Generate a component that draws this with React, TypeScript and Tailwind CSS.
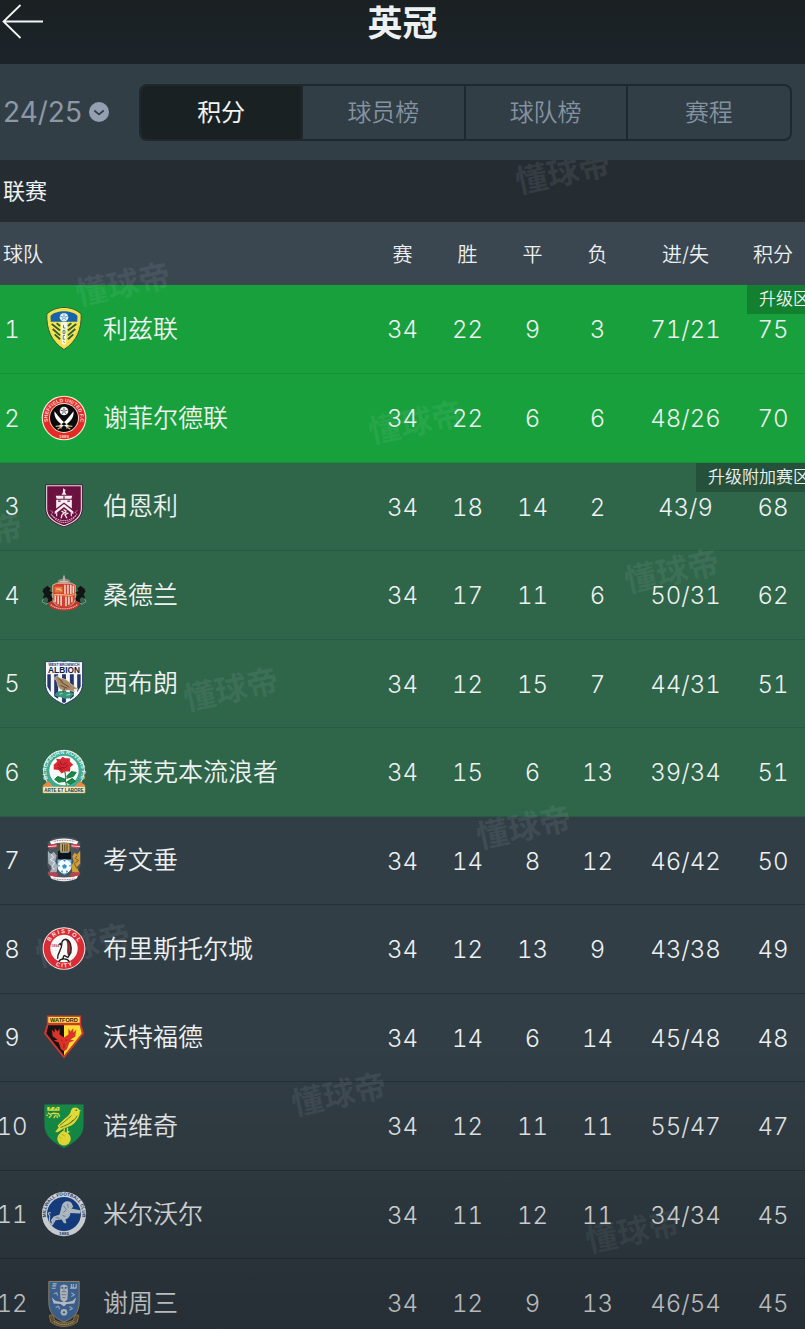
import { useState } from "react";
import type { ReactNode } from "react";

const LABEL = "Liberation Sans, sans-serif";

function Leeds() {
  return (
    <>
      <path d="M24.5 2.5C31 2.5 38 5 42 9.500C42.500 24 38 37 24.500 45.500C11 37 6.500 24 7 9.500C11 5 18 2.500 24.500 2.500Z" fill="#f2e14c" stroke="#31583a" strokeWidth="1" />
      <path d="M24.500 6.500C30 6.500 35.500 8 38.500 11C38.800 23 35 33.500 24.500 41.500C14 33.500 10.200 23 10.500 11C13.500 8 19 6.500 24.500 6.500Z" fill="#f4e64f" />
      <path d="M24.500 6.500C30 6.500 35.500 8 38.300 11.200L38 17H11L10.700 11.200C13.500 8 19 6.500 24.500 6.500Z" fill="#1763a8" />
      <g stroke="#315b3a" strokeWidth="1.900">
        <path d="M12 19.500L20.500 26M13 24.500L20.500 31M15 30L20.500 35M17 18.500L20.500 21.500" />
        <path d="M37 19.500L28.500 26M36 24.500L28.500 31M34 30L28.500 35M32 18.500L28.500 21.500" />
      </g>
      <path d="M21.300 17.500H27.700L26.500 39L24.500 41L22.500 39Z" fill="#f7f7e8" />
      <path d="M24 20.500V23.500H26M23.500 26H25.500V29H23.500ZM25.500 31H23.700V35H25.500M24 37L25 38.500" fill="none" stroke="#53744f" strokeWidth=".9" />
      <circle cx="24.500" cy="12.500" r="4.400" fill="#dcebf5" />
      <circle cx="24.500" cy="12.500" r="1.300" fill="none" stroke="#6c9dc8" strokeWidth=".8" />
      <path d="M24.500 8.500V11M20.500 11.500L23 12.200M28.500 11.500L26 12.200M22 15.800L23.700 13.800M27 15.800L25.300 13.800" stroke="#6c9dc8" strokeWidth=".8" />
    </>
  );
}

function SheffieldUnited() {
  return (
    <>
      <circle cx="24.500" cy="24.500" r="22.800" fill="#f6e9d5" />
      <circle cx="24.500" cy="24.500" r="21.600" fill="#e22a26" />
      <circle cx="24.500" cy="24.500" r="15.200" fill="#f4e3d3" />
      <circle cx="24.500" cy="24.500" r="14.300" fill="#0c0a0b" />
      <path id="shu-top" d="M8 27.500A16.700 16.700 0 1 1 41 27.500" fill="none" />
      <text fontFamily={LABEL} fontSize="5.200" fontWeight="700" fill="#fbd9cf">
        <textPath href="#shu-top" startOffset="50%" textAnchor="middle">SHEFFIELD UNITED F.C</textPath>
      </text>
      <text x="24.500" y="44.800" textAnchor="middle" fontFamily={LABEL} fontSize="4.500" fontWeight="700" fill="#fbd9cf">1889</text>
      <circle cx="24.500" cy="17.300" r="4.400" fill="#f5f5f5" />
      <path d="M24.500 14V16M21 16.500L23.200 17M28 16.500L25.800 17M22.500 20.300L23.700 18.600M26.500 20.300L25.300 18.600" stroke="#444" strokeWidth=".8" />
      <circle cx="24.500" cy="17.300" r="1.200" fill="none" stroke="#444" strokeWidth=".6" />
      <path d="M14.800 17.500C14 24 18 29.500 27.800 34L29.500 32C23 28.500 20.500 24.500 14.800 17.500ZM34.200 17.500C35 24 31 29.500 21.200 34L19.500 32C26 28.500 28.500 24.500 34.200 17.500Z" fill="#fff" />
      <path d="M16 33L20 32.500L22 35M33 33L29 32.500L27 35M28 34L31 36M21 34L18 36" fill="none" stroke="#d9b878" strokeWidth="1.300" />
    </>
  );
}

function Burnley() {
  return (
    <>
      <path d="M5.500 2.500H43.500V27C43.500 37 35 42.500 24.500 46C14 42.500 5.500 37 5.500 27Z" fill="#4d0a2d" />
      <path d="M6.800 3.800H42.200V27C42.200 36 34 41.500 24.500 44.700C15 41.500 6.800 36 6.800 27Z" fill="#6a1140" stroke="#f0dce6" strokeWidth="1.100" />
      <path d="M23.500 6.500L26 8L25.500 10.500L27 13H22L23.500 10.500Z" fill="#f5eaf0" />
      <path d="M16 14H33L32 17H17ZM16.500 18H32.500V27L24.500 21L16.500 27Z" fill="#f7eef3" />
      <path d="M18.500 19.500H21M28 19.500H30.500M24.500 14.500V17" stroke="#6a1140" strokeWidth="1.300" />
      <path d="M24.500 22.500L34 30V33L24.500 25.600L15 33V30Z" fill="#f7eef3" />
      <path d="M17 31V35M32 31V35" stroke="#e9c9d9" strokeWidth="1.300" />
      <path d="M24 28L26.500 29.500L25.200 31.500L28 32L25.500 33.500L27.500 37M25 31L22.500 33.500L21.500 37M22 29.500L24 31" fill="none" stroke="#f7eef3" strokeWidth="1.300" />
      <path d="M11 29L13 31L11.500 33C16 38 20 39.300 24.500 39.500C29 39.300 33 38 37.500 33L36 31L38 29M12 34C17 40 20 41.200 24.500 41.500C29 41.200 32 40 37 34" fill="none" stroke="#dfb6cb" strokeWidth="1" strokeDasharray="1.700 .6" />
    </>
  );
}

function Sunderland() {
  return (
    <>
      <path d="M24.500 5L26 8L30 9L31.500 13H17.500L19 9L23 8Z" fill="#9a8b83" />
      <path d="M24.500 4.500V11M20.500 11H28.500" stroke="#d9d5cc" strokeWidth="1" />
      <path d="M13 14.500L17 12.500H32L36 14.500V29C35 34 30 37 24.500 39C19 37 14 34 13 29Z" fill="#cf3f2c" stroke="#efc8a9" strokeWidth=".9" />
      <path d="M15.500 25V32M18.500 25V34M21.500 25V35.500M25.500 14V23.500M28.500 14V23.500M31.500 14V23.500M34 15V23M26.500 26V36M29.500 26V34.500M32.500 26V32" stroke="#f8e9e1" strokeWidth="1.400" />
      <path d="M14 24.500C19 22.500 30 26.500 35 24" fill="none" stroke="#f2ba72" strokeWidth="1.300" />
      <path d="M15 16H23V22H15Z" fill="#e2793a" />
      <path d="M16.500 18.500H20.500L22 20.500" stroke="#fae0b2" fill="none" />
      <path d="M3.500 18.500L7.500 15L11 18L9.500 20.500L13 22L10.500 24L13 28L11.500 33H7.500L8.500 28.500L6 26.500L2.500 29L4.500 23.500L2.500 21Z" fill="#121514" />
      <path d="M45.500 18.500L41.500 15L38 18L39.500 20.500L36 22L38.500 24L36 28L37.500 33H41.500L40.500 28.500L43 26.500L46.500 29L44.500 23.500L46.500 21Z" fill="#121514" />
      <path d="M3.500 28L2 31L6 34L12 31L18 36L24.500 38.500L31 36L37 31L43 34L47 31L45.500 28" fill="none" stroke="#a9b0a8" strokeWidth=".7" />
      <path d="M8 33L12 31L17 35.500L24.500 37.500L32 35.500L37 31L41 33L38 37.500C31 41.500 18 41.500 11 37.500Z" fill="#bf342b" />
      <path d="M11 34.500C18 40 31 40 38 34.500" fill="none" stroke="#f3c9bf" strokeWidth="1.200" strokeDasharray="1.300 .8" />
    </>
  );
}

function WestBrom() {
  return (
    <>
      <path d="M5.500 2.500C11 4 18 1 24.500 2.500C31 1 38 4 43.500 2.500V25C43.500 36 35 41.500 24.500 46.500C14 41.500 5.500 36 5.500 25Z" fill="#f3f6fa" stroke="#1d2f5c" strokeWidth=".9" />
      <path d="M7.500 15.500H11V34L7.500 28ZM14.500 15.500H18.500V40.500L14.500 38ZM22.500 15.500H26.500V44L24.500 45L22.500 44ZM30.500 15.500H34.500V38L30.500 41ZM38 15.500H41.500V28L38 34Z" fill="#26356b" />
      <text x="24.500" y="7.500" textAnchor="middle" fontFamily={LABEL} fontSize="3.600" fontWeight="700" fill="#26356b">WEST BROMWICH</text>
      <text x="24.500" y="14.600" textAnchor="middle" fontFamily={LABEL} fontSize="8.500" fontWeight="700" fill="#14213f">ALBION</text>
      <path d="M15 37C18 31 22 34 24 32C28 35 32 33 35 36C31 38 32 41 28 40C24 42 22 38 19 39Z" fill="#379478" />
      <path d="M20 36L23 35M27 37L31 36" stroke="#a4dfc5" />
      <path d="M14 20L17.500 17L21 19.500C25 20 29 22 31 25L39 31L34.500 31L36 33.500L29 32C22 33.500 18 30 17.500 24L16.500 21.500Z" fill="#a78b65" stroke="#f0e6d4" strokeWidth=".6" />
      <path d="M21 23L30 29M21 27L28 30M19 20L23 23M25 30L24 34" stroke="#61452f" strokeWidth="1" />
    </>
  );
}

function Blackburn() {
  return (
    <>
      <circle cx="24.500" cy="23" r="21.300" fill="#e9f4ec" />
      <circle cx="24.500" cy="23" r="20.300" fill="#43a891" />
      <path id="rovers-arc" d="M8.800 33A18 18 0 1 1 40.200 33" fill="none" />
      <text fontFamily={LABEL} fontSize="5.600" fontWeight="700" fill="#dff4e5">
        <textPath href="#rovers-arc" startOffset="50%" textAnchor="middle">BLACKBURN ROVERS F.C</textPath>
      </text>
      <circle cx="24.500" cy="23" r="15" fill="#f7faf5" />
      <path d="M25 23C27 28 25 32 27 38M26 32L18 29L15 32L19 35L26 34M27 29L32 24L37 25L34 29L27 31M27 35L33 31L36 34L31 37Z" fill="#178a4b" stroke="#14763f" strokeWidth="1" />
      <path d="M14 17L17.500 14L16.500 11L21 11.500L23 9L26 10.500L30.500 10.500L30.500 14L34 17L31 19.500L30.500 24L25.500 24L22 26L19 22.500L14 22Z" fill="#da2734" />
      <path d="M19 16C20 21 27 22 28 17M21 13.500C20 17 25 19 27 14M18 20L23 22" fill="none" stroke="#8f1421" strokeWidth="1" />
      <path d="M3 38L8 34L12 37V40H3ZM46 38L41 34L37 37V40H46Z" fill="#e18b43" />
      <path d="M3 39.500H46V46H3Z" fill="#f6edca" stroke="#bb9e62" strokeWidth=".5" />
      <text x="24.500" y="44.700" textAnchor="middle" fontFamily={LABEL} fontSize="4.600" fontWeight="700" fill="#27342c">ARTE ET LABORE</text>
    </>
  );
}

function Coventry() {
  return (
    <>
      <path d="M13 2.500C20 1 29 1 36 2.500L41.500 7L39.500 12L41.500 17V30L39.500 35L41.500 39L36 44.500C29 47.500 20 47.500 13 44.500L7.500 39L9.500 35L7.500 30V17L9.500 12L7.500 7Z" fill="#4b555e" />
      <path d="M10 5.500C19 1.500 30 1.500 39 5.500L37.500 9C29 6 20 6 11.500 9Z" fill="#faf7f7" />
      <path d="M8 9L17 8V12L9 13ZM41 9L32 8V12L40 13Z" fill="#c23f4c" />
      <path d="M8 11L17 10M41 11L32 10" stroke="#f7e9ea" strokeWidth=".9" />
      <path d="M10 40C19 43 30 43 39 40L37.500 43.500C29 47 20 47 11.500 43.500Z" fill="#faf7f7" />
      <path d="M8 36.500L18 38V42L9 40ZM41 36.500L31 38V42L40 40Z" fill="#c23f4c" />
      <path d="M14 5.500C21 4 28 4 35 5.500M14 43.500C21 45 28 45 35 43.500" fill="none" stroke="#9c7178" strokeWidth="1" strokeDasharray="1 .7" />
      <path d="M18 16H32V31C32 35 28 38 25 39.500C21 38 18 35 18 31Z" fill="#79c4ed" />
      <path d="M18 16L20 14.500L21 17H29L31 15L32 17V24H18Z" fill="#101319" />
      <path d="M20.500 7.500H30V16H20.500Z" fill="#c9a24e" />
      <path d="M23 8.500V15.500M25.300 8.500V15.500M27.600 8.500V15.500" stroke="#45381f" strokeWidth="1" />
      <circle cx="25" cy="31" r="7" fill="#f6fbff" />
      <path d="M25 28.500L27.500 30.300L26.500 33.200H23.500L22.500 30.300ZM23.500 24.500H26.500L25 26.500ZM18.500 29L20.500 30L19 32ZM31.500 29L29.500 30L31 32ZM21 36L23 35L23.500 37.500ZM29 36L27 35L26.500 37.500Z" fill="#3e91c4" />
      <path d="M8 15L11 19L14 16L17 20L15.500 26L18 31L17 37H10L12.500 32L8.500 28Z" fill="#a5afb9" />
      <path d="M11 18L14 22L10.500 24L15 27L12 32L15 34" fill="none" stroke="#e5ebef" strokeWidth="1" />
      <path d="M41 15L38 19L35 17L33 21L34.500 26L32 31L33 37H40L37.500 32L41 28Z" fill="#d19f38" />
      <path d="M38 20L36 23L39.500 25L35 28L37.500 33" fill="none" stroke="#7a5926" strokeWidth="1" />
    </>
  );
}

function BristolCity() {
  return (
    <>
      <circle cx="24.500" cy="24" r="21.800" fill="#f5e5e3" />
      <circle cx="24.500" cy="24" r="20.800" fill="#db2b34" />
      <circle cx="24.500" cy="24" r="14" fill="#f8f8f6" />
      <path id="bristol-top" d="M8.800 24A15.700 15.700 0 0 1 40.200 24" fill="none" />
      <path id="bristol-bottom" d="M5.300 24A19.200 19.200 0 0 0 43.700 24" fill="none" />
      <text fontFamily={LABEL} fontSize="5.800" fontWeight="700" fill="#fce7e5">
        <textPath href="#bristol-top" startOffset="50%" textAnchor="middle">B R I S T O L</textPath>
      </text>
      <text fontFamily={LABEL} fontSize="5.800" fontWeight="700" fill="#fce7e5">
        <textPath href="#bristol-bottom" startOffset="50%" textAnchor="middle">C I T Y</textPath>
      </text>
      <text x="15.500" y="22.500" textAnchor="middle" fontFamily={LABEL} fontSize="3.600" fontWeight="700" fill="#b9454a">1894</text>
      <path d="M18 34.500C17.500 28 22.500 26 22.300 19C22.200 16.500 23.500 15 26 14.500C31 15 32.500 22 31.500 28L28.500 33L24.500 31" fill="none" stroke="#1b1a1d" strokeWidth="1.400" />
      <path d="M27 15C31 17 32 23 31 27L29 31C27 26 30 21 27 15Z" fill="#b4282f" stroke="#272024" strokeWidth=".8" />
      <path d="M19 37.500C21 33.500 28 33.500 30 37.500M24.500 31L23 35M21.500 18.500L20 19.500L22 20.500" fill="none" stroke="#1b1a1d" strokeWidth="1.300" />
    </>
  );
}

function Watford() {
  return (
    <>
      <path d="M7 2.500H42V11.500L45 21L24.500 46.500L4 21L7 11.500Z" fill="#cf382d" />
      <path d="M8.500 4H40.500V10H8.500Z" fill="#f7df4c" />
      <text x="24.500" y="9.200" textAnchor="middle" fontFamily={LABEL} fontSize="5.700" fontWeight="700" fill="#2f2410">WATFORD</text>
      <path d="M8.500 12.500H24.500V43.500L6.500 21Z" fill="#171213" />
      <path d="M24.500 12.500H40.500L42.500 21L24.500 43.500Z" fill="#f6df30" />
      <path d="M12 17L15 20L15 15.500L18 19L20 15.500V22L24.500 25L29 22V15.500L31 19L34 15.500V20L37 17L36 24L31 27L35 28L30 30L27.500 37L24.500 39L21.500 37L19 30L14 28L18 27L13 24Z" fill="#dc3329" />
      <path d="M21.500 27L23 29M27.500 27L26 29M24.500 31V36" stroke="#8d1c1a" strokeWidth=".9" />
    </>
  );
}

function Norwich() {
  return (
    <>
      <path d="M4.500 2.500H44.500V23C44.500 34 37 41 24.500 47C12 41 4.500 34 4.500 23Z" fill="#15914a" />
      <path d="M7.500 5H10V6.500H12V5H15V6.500H17V5H20V9H7.500Z" fill="#eee83d" />
      <path d="M9.500 7H11M14 7H15.500M17.500 7H18.500" stroke="#15914a" strokeWidth="1" />
      <path d="M8 11L10 12.500L14 11.500L19 12L20 15M9 16L12 13.500M14 16.500L16 13.500M18 16.500L17 13.500M8 14L6.500 13" fill="none" stroke="#eee83d" strokeWidth="1.300" />
      <path d="M33 6.500C36 4.500 40 6 40.500 9C41 14 38 20 32 24L24 27L18 31L15.500 30.500L19 26L18 24L24 18C28 15 31 13 31.500 9Z" fill="#f3e838" />
      <path d="M38 14C35 20 29 23 21 26M32 14L25 20L20 24M30 22L34 18" fill="none" stroke="#5a8a32" strokeWidth="1" />
      <circle cx="37" cy="8.500" r=".8" fill="#266633" />
      <path d="M40 8L42 9L40 10Z" fill="#f3e838" />
      <path d="M25 27L24 32M28 26V32M21 32L24 30L27 32L30 30" fill="none" stroke="#f3e838" strokeWidth="1.300" />
      <circle cx="24.500" cy="37.500" r="6.900" fill="#f3e838" />
      <path d="M22 33L26 35M19.500 36L22 37" stroke="#b2c131" strokeWidth=".8" />
    </>
  );
}

function Millwall() {
  return (
    <>
      <circle cx="24.500" cy="24.500" r="22.600" fill="#edf1f4" />
      <circle cx="24.500" cy="24.500" r="17.300" fill="#174691" />
      <path id="millwall-arc" d="M10.200 36.500A18.700 18.700 0 1 1 38.800 36.500" fill="none" />
      <text fontFamily={LABEL} fontSize="4.700" fontWeight="700" fill="#24447b">
        <textPath href="#millwall-arc" startOffset="50%" textAnchor="middle">MILLWALL FOOTBALL CLUB</textPath>
      </text>
      <text x="24.500" y="46" textAnchor="middle" fontFamily={LABEL} fontSize="4.500" fontWeight="700" fill="#24447b">1885</text>
      <path d="M22 17C23 12 28 10 32 13L34 17L32 19L42 21L41 24L31 23.500C31 27 29 29 26 30L27 34H24.500L22 30L16 31L13 36L10.500 37L12 33L11 31L14 27L20 25Z" fill="#cbd5df" />
      <path d="M11 35C7 30 12 27 9 25C8 24 9 22.500 11 23.500" fill="none" stroke="#cbd5df" strokeWidth="1.200" />
      <path d="M24 16L27 20L24 23M28 14L29 18M23 26L26 27M16 28L20 29" stroke="#7d93b3" strokeWidth="1" fill="none" />
    </>
  );
}

function SheffieldWednesday() {
  return (
    <>
      <path d="M9 2.500H40V23C40 34 35 39.500 24.500 44C14 39.500 9 34 9 23Z" fill="#4b79b5" stroke="#b8a577" strokeWidth="1" />
      <path d="M13 5H17M12.500 7H16.500M12 9.500H16M32 5V9H34V5M35 9H37V5M30.500 9.500H37" stroke="#d5e4f2" strokeWidth="1.100" fill="none" />
      <path d="M21 7L24.500 5.500L28 7L28.500 13L28 21L24.500 24L21 21L20.500 13Z" fill="#dfe8ee" />
      <circle cx="22.800" cy="9" r="1.100" fill="#61738b" />
      <circle cx="26.200" cy="9" r="1.100" fill="#61738b" />
      <path d="M22 13H27M22 16H27M23 19H26M24.500 10V12" stroke="#7e93aa" strokeWidth="1" />
      <path d="M12 19L16 22.500L22 23.500H28L33 22.500L37 19L35 25L27 25.500L24.500 28L21 25.500L14 25Z" fill="#e9eff2" />
      <path d="M14 15L17 14L18 17M32 14L35 16L32 18M16 29L19 28L20 31M30 28L33 30L30 32" fill="none" stroke="#c0d3e6" strokeWidth="1.200" />
      <circle cx="24.500" cy="34" r="3.400" fill="#dce8f2" />
      <circle cx="24.500" cy="34" r="1.200" fill="#4b79b5" />
      <path d="M9.500 37L13 36.500L15 42C21 45.500 28 45.500 34 42L36 36.500L39.500 37L38 44C30 50 19 50 11 44Z" fill="#81633a" stroke="#c3a465" strokeWidth=".8" />
      <path d="M14 43.500C21 47.500 28 47.500 35 43.500" fill="none" stroke="#ead5a4" strokeWidth="1.100" strokeDasharray="1.300 .8" />
    </>
  );
}

type Zone = "promotion" | "playoff" | "none";

interface Team {
  name: string;
  zone: Zone;
  tag?: string;
  stats: string[];
  crest: ReactNode;
}

const TEAMS: Team[] = [
  { name: "利兹联", zone: "promotion", tag: "升级区", stats: ["34", "22", "9", "3", "71/21", "75"], crest: <Leeds /> },
  { name: "谢菲尔德联", zone: "promotion", stats: ["34", "22", "6", "6", "48/26", "70"], crest: <SheffieldUnited /> },
  { name: "伯恩利", zone: "playoff", tag: "升级附加赛区", stats: ["34", "18", "14", "2", "43/9", "68"], crest: <Burnley /> },
  { name: "桑德兰", zone: "playoff", stats: ["34", "17", "11", "6", "50/31", "62"], crest: <Sunderland /> },
  { name: "西布朗", zone: "playoff", stats: ["34", "12", "15", "7", "44/31", "51"], crest: <WestBrom /> },
  { name: "布莱克本流浪者", zone: "playoff", stats: ["34", "15", "6", "13", "39/34", "51"], crest: <Blackburn /> },
  { name: "考文垂", zone: "none", stats: ["34", "14", "8", "12", "46/42", "50"], crest: <Coventry /> },
  { name: "布里斯托尔城", zone: "none", stats: ["34", "12", "13", "9", "43/38", "49"], crest: <BristolCity /> },
  { name: "沃特福德", zone: "none", stats: ["34", "14", "6", "14", "45/48", "48"], crest: <Watford /> },
  { name: "诺维奇", zone: "none", stats: ["34", "12", "11", "11", "55/47", "47"], crest: <Norwich /> },
  { name: "米尔沃尔", zone: "none", stats: ["34", "11", "12", "11", "34/34", "45"], crest: <Millwall /> },
  { name: "谢周三", zone: "none", stats: ["34", "12", "9", "13", "46/54", "45"], crest: <SheffieldWednesday /> },
];

const ZONE_STYLE: Record<Zone, string> = {
  promotion: "bg-[#17a03b] border-[#16933a]",
  playoff: "bg-[#2f6549] border-[#2b5a44]",
  none: "border-[#263038]",
};

const TABS = ["积分", "球员榜", "球队榜", "赛程"];
const COLUMNS = ["赛", "胜", "平", "负", "进/失", "积分"];

/* Watermark stamps float over the standings, measured from the league bar. */
const STAMPS = [
  "left-[515px] top-[-11px]",
  "left-[75px] top-[101px]",
  "left-[368px] top-[239px]",
  "left-[-73px] top-[352px]",
  "left-[624px] top-[388px]",
  "left-[183px] top-[506px]",
  "left-[476px] top-[644px]",
  "left-[35px] top-[762px]",
  "left-[291px] top-[911px]",
  "left-[585px] top-[1048px]",
  "left-[142px] top-[1167px]",
];

export default function App() {
  const [tab, setTab] = useState(0);
  const [season, setSeason] = useState("24/25");

  return (
    <div className="flex h-screen flex-col overflow-hidden bg-[#323e46] font-['Inter','Noto_Sans_CJK_SC',sans-serif] text-[#eef1f2]">
      <header className="grid h-16 shrink-0 grid-cols-[1fr_auto_1fr] items-start bg-linear-to-b from-[#1a2022] to-[#1d242a]">
        <button type="button" aria-label="返回" className="w-11 pt-1">
          <svg viewBox="0 0 44 36" className="h-9 w-11" fill="none" stroke="#f3f5f5" strokeWidth="1.800">
            <path d="M20.500 1L3.500 17.500L20.500 34M3.500 17.500H43" />
          </svg>
        </button>
        <h1 className="text-[35px] leading-[46px] font-bold">英冠</h1>
      </header>

      <div className="flex h-24 shrink-0 items-center justify-between bg-[#323e46] pr-[13px]">
        <div className="relative h-10 w-[111px] shrink-0 text-[#8c98a6]">
          <select
            aria-label="赛季"
            value={season}
            onChange={(e) => setSeason(e.target.value)}
            className="h-10 w-full appearance-none bg-transparent pl-[3px] text-[28px] leading-10 outline-none"
          >
            <option>24/25</option>
            <option>23/24</option>
          </select>
          <svg viewBox="0 0 20 20" className="pointer-events-none absolute top-[10px] right-[2px] size-5">
            <circle cx="10" cy="10" r="10" fill="#949fb2" />
            <path d="M5.300 8.500L10 12.500L14.700 8.500" fill="none" stroke="#323e46" strokeWidth="1.700" />
          </svg>
        </div>
        <nav className="ml-7 grid h-[57px] flex-1 grid-cols-4 divide-x-2 divide-[#1e282e] overflow-hidden rounded-lg border-2 border-[#1e282e]">
          {TABS.map((label, i) => (
            <button
              key={label}
              type="button"
              aria-pressed={tab === i}
              onClick={() => setTab(i)}
              className={tab === i ? "bg-[#1a2123] pt-0.5 text-2xl text-[#f1f4f4]" : "pt-0.5 text-2xl font-[350] text-[#8592a0]"}
            >
              {label}
            </button>
          ))}
        </nav>
      </div>

      <main className="relative min-h-0 flex-1 overflow-hidden bg-[#323e46]">
        <h2 className="flex h-[62px] items-center bg-[#262d32] pl-[3px] text-[22px] leading-8">联赛</h2>
        <table className="w-full table-fixed border-collapse tabular-nums">
          <colgroup>
            <col className="w-6" />
            <col className="w-[79px]" />
            <col />
            <col className="w-[65px]" />
            <col className="w-[65px]" />
            <col className="w-[65px]" />
            <col className="w-[65px]" />
            <col className="w-[111px]" />
            <col className="w-16" />
          </colgroup>
          <thead>
            <tr className="h-[63px] bg-[#3b4750] text-xl">
              <th colSpan={3} className="pt-0.5 pl-[3px] text-left font-[350]">球队</th>
              {COLUMNS.map((c) => (
                <th key={c} className="pt-0.5 font-[350] whitespace-nowrap">{c}</th>
              ))}
            </tr>
          </thead>
          <tbody>
            {TEAMS.map((team, i) => (
              <tr key={team.name} className={`h-[88px] border-b even:h-[89px] ${ZONE_STYLE[team.zone]}`}>
                <td className="pt-0.5 text-2xl font-light">
                  <div className="flex justify-center">{i + 1}</div>
                </td>
                <td>
                  <svg viewBox="0 0 49 49" className="relative z-10 mx-auto size-12" aria-hidden="true">{team.crest}</svg>
                </td>
                <td className="pt-0.5 text-[25px] font-[350] whitespace-nowrap">{team.name}</td>
                {team.stats.map((value, col) => (
                  <td key={col} className={`pt-[3px] text-center text-2xl font-light ${col === 5 ? "relative" : ""}`}>
                    {value}
                    {col === 5 && team.tag && (
                      <span className="absolute top-0 right-[-5px] flex h-[29px] items-center bg-black/20 pl-3 text-[17px] font-[350] whitespace-nowrap">
                        {team.tag}
                      </span>
                    )}
                  </td>
                ))}
              </tr>
            ))}
          </tbody>
        </table>
        <div aria-hidden="true" className="pointer-events-none absolute inset-0 overflow-hidden">
          {STAMPS.map((place) => (
            <span key={place} className={`absolute -rotate-12 text-[32px] leading-[48px] font-bold whitespace-nowrap text-[#c8d8e0]/10 ${place}`}>
              懂球帝
            </span>
          ))}
        </div>
        <div aria-hidden="true" className="pointer-events-none absolute inset-x-0 bottom-0 z-20 h-72 bg-linear-to-b from-transparent to-black/25" />
      </main>
    </div>
  );
}
